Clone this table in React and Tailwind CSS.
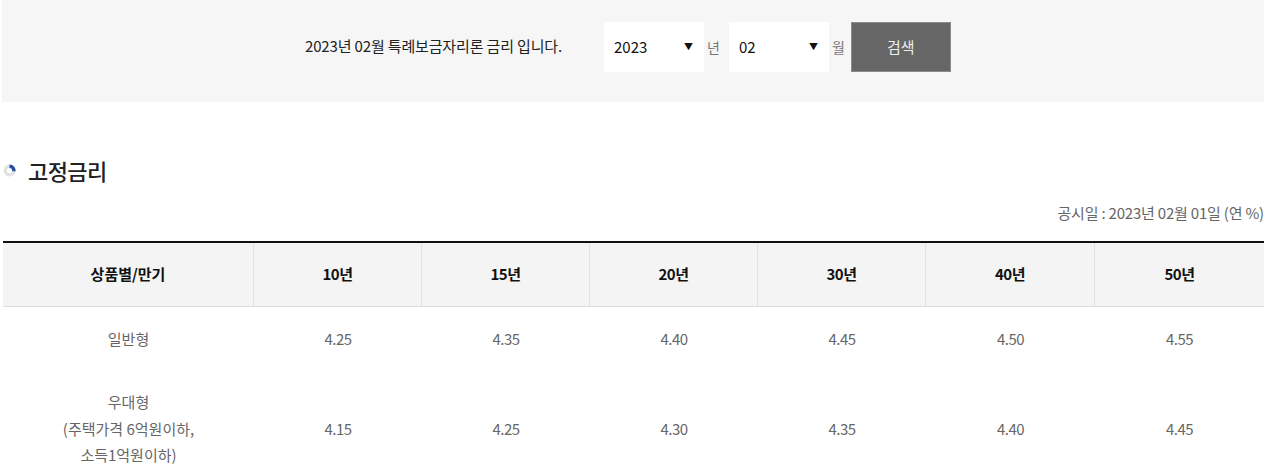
export default function App() {
  const font = { fontFamily: '"Noto Sans CJK KR", "Noto Sans", sans-serif' };
  const heads = ["10년", "15년", "20년", "30년", "40년", "50년"];
  const r1 = ["4.25", "4.35", "4.40", "4.45", "4.50", "4.55"];
  const r2 = ["4.15", "4.25", "4.30", "4.35", "4.40", "4.45"];
  const cols = "grid grid-cols-[251px_168px_168px_168px_168px_169px_169px]";
  return (
    <div className="w-[1288px] h-[476px] bg-white overflow-hidden" style={font}>
      <div className="ml-[2px] w-[1262px] h-[102px] bg-[#f6f6f6] flex items-start pt-[22px] pl-[303px]">
        <span className="h-[50px] flex items-center text-[15px] text-[#222] tracking-[-0.15px] mr-[42px] pb-[2px]">
          2023년 02월 특례보금자리론 금리 입니다.
        </span>
        <div className="w-[100px] h-[50px] bg-white flex items-center justify-between pl-[10px] pr-[11px] text-[15px] text-[#111]">
          <span>2023</span>
          <span className="text-[9px]">▼</span>
        </div>
        <span className="h-[50px] flex items-center ml-[3px] mr-[9px] text-[14px] text-[#777]">년</span>
        <div className="w-[100px] h-[50px] bg-white flex items-center justify-between pl-[10px] pr-[11px] text-[15px] text-[#111]">
          <span>02</span>
          <span className="text-[9px]">▼</span>
        </div>
        <span className="h-[50px] flex items-center ml-[3px] mr-[6px] text-[14px] text-[#777]">월</span>
        <div className="w-[100px] h-[50px] bg-[#666] border border-[#8a8a8a] flex items-center justify-center text-[15px] text-[#eee]">
          검색
        </div>
      </div>

      <div className="ml-[3px] mt-[55px] flex items-center h-[26px]">
        <svg width="13" height="13" viewBox="0 0 13 13" className="mr-[12px]">
          <circle cx="6.5" cy="6.5" r="4.3" fill="none" stroke="#e2e2e2" strokeWidth="3.4" />
          <path d="M6.5 2.2 A4.3 4.3 0 0 1 10.8 7.2" fill="none" stroke="#2b4ea0" strokeWidth="3.4" />
        </svg>
        <span className="text-[22px] font-medium text-[#222] tracking-[-0.6px]">고정금리</span>
      </div>

      <div className="w-[1264px] text-right mt-[20px] text-[15px] text-[#666] tracking-[-0.2px] leading-[20px]">
        공시일 : 2023년 02월 01일 (연 %)
      </div>

      <div className="ml-[3px] w-[1261px] mt-[18px] border-t-2 border-[#111]">
        <div className={`${cols} bg-[#f4f4f4] border-b border-[#dedede] h-[64px]`}>
          <div className="flex items-center justify-center border-r border-[#e2e2e2] text-[15px] font-bold text-[#111]">
            상품별/만기
          </div>
          {heads.map((h, i) => (
            <div
              key={h}
              className={`flex items-center justify-center text-[15px] font-bold text-[#111] tracking-[-0.5px] ${i < 5 ? "border-r border-[#e2e2e2]" : ""}`}
            >
              {h}
            </div>
          ))}
        </div>
        <div className={`${cols} h-[65px] text-[15px] text-[#666]`}>
          <div className="flex items-center justify-center">일반형</div>
          {r1.map((v, i) => (
            <div key={i} className="flex items-center justify-center tracking-[-0.5px]">{v}</div>
          ))}
        </div>
        <div className={`${cols} text-[15px] text-[#666] py-[17px] leading-[26.5px]`}>
          <div className="flex flex-col items-center justify-center text-center">
            <span>우대형</span>
            <span>(주택가격 6억원이하,</span>
            <span>소득1억원이하)</span>
          </div>
          {r2.map((v, i) => (
            <div key={i} className="flex items-center justify-center tracking-[-0.5px]">{v}</div>
          ))}
        </div>
      </div>
    </div>
  );
}
